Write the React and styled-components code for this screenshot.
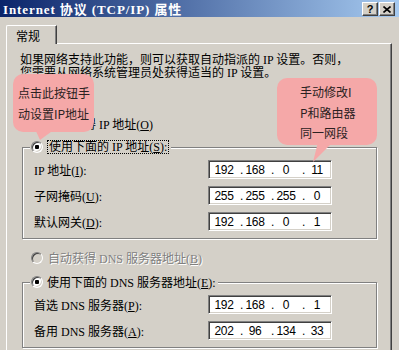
import React from "react";
import styled, { createGlobalStyle } from "styled-components";

const GlobalStyle = createGlobalStyle`
  html, body {
    margin: 0;
    padding: 0;
    background: #d4d0c8;
  }
  body {
    font-family: "Liberation Serif", "Noto Sans CJK SC", serif;
  }
`;

const Window = styled.div`
  position: relative;
  width: 399px;
  height: 350px;
  overflow: hidden;
  background: #d4d0c8;
  font-size: 12px;
  color: #000;
`;

const TitleBar = styled.div`
  height: 17px;
  display: flex;
  align-items: center;
  justify-content: space-between;
  padding: 0 4px 0 3px;
  background: linear-gradient(to right, #0a246a, #a6caf0);
`;

const Title = styled.div`
  color: #fff;
  font-weight: bold;
  font-size: 13px;
  letter-spacing: 0.9px;
  white-space: nowrap;
`;

const Caption = styled.div`
  display: flex;
  gap: 1px;
  margin-top: 1px;
`;

const CaptionButton = styled.div`
  width: 16px;
  height: 14px;
  box-sizing: border-box;
  background: #d4d0c8;
  border: 1px solid;
  border-color: #fff #404040 #404040 #fff;
  box-shadow: inset -1px -1px #808080;
  display: flex;
  align-items: center;
  justify-content: center;
  font: bold 11px "Liberation Sans", sans-serif;
  line-height: 1;
`;

const Body = styled.div`
  padding: 8px 7px 0 6px;
`;

const TabStrip = styled.div`
  display: flex;
`;

const Tab = styled.div`
  position: relative;
  z-index: 1;
  width: 51px;
  height: 19px;
  box-sizing: border-box;
  margin-bottom: -1px;
  padding: 3px 0 0 9px;
  background: #d4d0c8;
  border-top: 1px solid #fff;
  border-left: 1px solid #fff;
  border-right: 1px solid #404040;
  box-shadow: inset -1px 0 #808080;
  border-top-left-radius: 2px;
  font-family: "Noto Sans CJK SC", sans-serif;
  line-height: 14px;
`;

const Panel = styled.div`
  height: 320px;
  box-sizing: border-box;
  padding: 10px 0 0 13px;
  border-top: 1px solid #fff;
  border-left: 1px solid #fff;
  border-right: 1px solid #404040;
  box-shadow: inset -1px 0 #808080;
`;

const Intro = styled.div`
  line-height: 13px;
  white-space: nowrap;
`;

const RadioRow = styled.div`
  display: flex;
  align-items: center;
  gap: 5px;
  height: 14px;
  margin-top: ${(p) => p.$top}px;
  padding-left: 11px;
  color: ${(p) => (p.$disabled ? "#808080" : "#000")};
  text-shadow: ${(p) => (p.$disabled ? "1px 1px 0 #fff" : "none")};
  white-space: nowrap;
`;

const Radio = styled.span`
  flex: none;
  width: 12px;
  height: 12px;
  box-sizing: border-box;
  border-radius: 50%;
  border: 1px solid;
  border-color: #808080 #fff #fff #808080;
  box-shadow: inset 1px 1px #404040, inset -1px -1px #d4d0c8;
  background: ${(p) =>
    p.$checked
      ? "radial-gradient(circle at 50% 50%, #000 0 2px, #fff 2.5px)"
      : p.$disabled
      ? "#d4d0c8"
      : "#fff"};
`;

const Group = styled.fieldset`
  margin: ${(p) => p.$top}px 0 0 2px;
  width: 355px;
  box-sizing: border-box;
  padding: 0;
  min-inline-size: 0;
  border: 1px solid #808080;
  box-shadow: inset 1px 1px 0 #fff, 1px 1px 0 #fff;
`;

const Legend = styled.legend`
  display: flex;
  align-items: center;
  gap: 4px;
  height: 14px;
  margin-left: 7px;
  padding: 0 2px 0 1px;
  background: #d4d0c8;
  white-space: nowrap;
`;

const Focus = styled.span`
  border: 1px dotted #000;
  padding: 0 1px;
  line-height: 12px;
`;

const Fields = styled.div`
  display: flex;
  flex-direction: column;
  gap: 7px;
  padding: 6px 0 7px 11px;
`;

const Row = styled.div`
  display: flex;
  align-items: center;
  height: 19px;
`;

const Label = styled.div`
  width: 174px;
  white-space: nowrap;
`;

const IpBox = styled.div`
  width: 124px;
  height: 19px;
  box-sizing: border-box;
  display: flex;
  align-items: center;
  padding-left: 3px;
  background: #fff;
  border: 1px solid;
  border-color: #808080 #fff #fff #808080;
  box-shadow: inset 1px 1px #404040, inset -1px -1px #d4d0c8;
  font: 12px "Liberation Sans", sans-serif;
  letter-spacing: -0.4px;
`;

const Octet = styled.span`
  width: 24px;
  text-align: center;
`;

const Dot = styled.span`
  width: 7px;
  padding-left: 4px;
  box-sizing: border-box;
`;

const Bubble = styled.div`
  position: absolute;
  z-index: 5;
  left: ${(p) => p.$x}px;
  top: ${(p) => p.$y}px;
  width: ${(p) => p.$w}px;
  height: ${(p) => p.$h}px;
  box-sizing: border-box;
  padding: ${(p) => p.$pad};
  border-radius: 10px;
  background: #f5a8a8;
  color: #2b2222;
  font: 12px "Noto Sans CJK SC", sans-serif;
  line-height: ${(p) => p.$lh}px;
  white-space: nowrap;

  &::after {
    content: "";
    position: absolute;
    left: ${(p) => p.$tailX}px;
    top: ${(p) => p.$h - 3}px;
    width: 20px;
    height: ${(p) => p.$tailH}px;
    background: #f5a8a8;
    clip-path: ${(p) => p.$tail};
  }
`;

function IpField({ value }) {
  const parts = value.split(".");
  return (
    <IpBox>
      {parts.map((part, i) => (
        <React.Fragment key={i}>
          <Octet>{part}</Octet>
          {i < 3 && <Dot>.</Dot>}
        </React.Fragment>
      ))}
    </IpBox>
  );
}

function Field({ label, value }) {
  return (
    <Row>
      <Label>{label}</Label>
      <IpField value={value} />
    </Row>
  );
}

export default function App() {
  return (
    <Window>
      <GlobalStyle />
      <TitleBar>
        <Title>Internet 协议 (TCP/IP) 属性</Title>
        <Caption>
          <CaptionButton>?</CaptionButton>
          <CaptionButton>
            <svg width="8" height="7" viewBox="0 0 8 7">
              <path d="M0.5 0.5 L7.5 6.5 M7.5 0.5 L0.5 6.5" stroke="#000" strokeWidth="1.6" />
            </svg>
          </CaptionButton>
        </Caption>
      </TitleBar>

      <Body>
        <TabStrip>
          <Tab>常规</Tab>
        </TabStrip>
        <Panel>
          <Intro>
            <div>如果网络支持此功能，则可以获取自动指派的 IP 设置。否则，</div>
            <div>您需要从网络系统管理员处获得适当的 IP 设置。</div>
          </Intro>

          <RadioRow $top={37}>
            <Radio />
            <span>
              自动获得 IP 地址(<u>O</u>)
            </span>
          </RadioRow>

          <Group $top={9}>
            <Legend>
              <Radio $checked />
              <Focus>
                使用下面的 IP 地址(<u>S</u>):
              </Focus>
            </Legend>
            <Fields>
              <Field label={<>IP 地址(<u>I</u>):</>} value="192.168.0.11" />
              <Field label={<>子网掩码(<u>U</u>):</>} value="255.255.255.0" />
              <Field label={<>默认网关(<u>D</u>):</>} value="192.168.0.1" />
            </Fields>
          </Group>

          <RadioRow $top={12} $disabled>
            <Radio $disabled />
            <span>
              自动获得 DNS 服务器地址(<u>B</u>)
            </span>
          </RadioRow>

          <Group $top={10}>
            <Legend>
              <Radio $checked />
              <span>
                使用下面的 DNS 服务器地址(<u>E</u>):
              </span>
            </Legend>
            <Fields>
              <Field label={<>首选 DNS 服务器(<u>P</u>):</>} value="192.168.0.1" />
              <Field label={<>备用 DNS 服务器(<u>A</u>):</>} value="202.96.134.33" />
            </Fields>
          </Group>
        </Panel>
      </Body>

      <Bubble
        $x={13}
        $y={74}
        $w={81}
        $h={58}
        $pad="8px 0 0 5px"
        $lh={21}
        $tailX={22}
        $tailH={11}
        $tail="polygon(0 0, 100% 0, 25% 100%)"
      >
        <div>点击此按钮手</div>
        <div>动设置IP地址</div>
      </Bubble>

      <Bubble
        $x={277}
        $y={78}
        $w={100}
        $h={67}
        $pad="4px 0 0 23px"
        $lh={20.5}
        $tailX={36}
        $tailH={20}
        $tail="polygon(25% 0, 100% 0, 0 100%)"
      >
        <div>手动修改I</div>
        <div>P和路由器</div>
        <div>同一网段</div>
      </Bubble>
    </Window>
  );
}
